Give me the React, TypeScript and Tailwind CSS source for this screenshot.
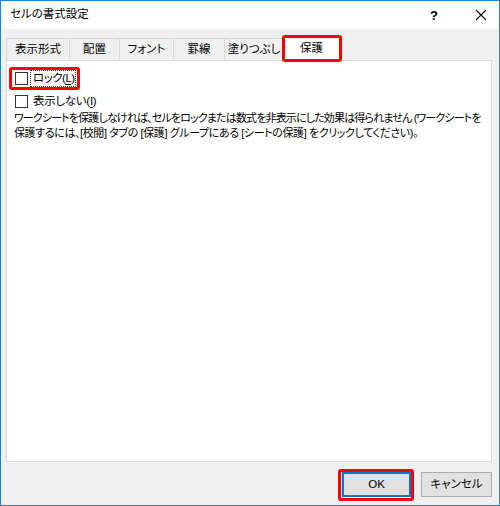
import React from "react";

const Tab = ({ label, w }: { label: string; w: string }) => (
  <div
    className={`${w} h-[22px] border-t border-l border-[#d9d9d9] flex items-center justify-center bg-[#f0f0f0] text-black`}
  >
    {label}
  </div>
);

export default function App() {
  return (
    <div className="w-[500px] h-[506px] border border-[#1883d7] flex flex-col bg-[#f0f0f0] text-[11.5px] leading-none text-black font-['Liberation_Sans','Noto_Sans_CJK_JP',sans-serif] [font-feature-settings:'palt'] overflow-hidden">
      {/* title bar */}
      <div className="h-[28px] bg-white flex items-center pl-[9px] shrink-0">
        <span className="flex-1">セルの書式設定</span>
        <span className="w-[20px] text-center mr-[31px] text-[13px] font-bold">?</span>
        <svg width="12" height="12" viewBox="0 0 12 12" className="mr-[12px]">
          <path d="M1 1 L11 11 M11 1 L1 11" stroke="#111" strokeWidth="1.1" />
        </svg>
      </div>

      {/* body */}
      <div className="flex-1 flex flex-col pl-[5px] pr-[7px]">
        {/* tabs */}
        <div className="mt-[7px] h-[24px] flex items-end relative z-10">
          <Tab label="表示形式" w="w-[63px]" />
          <Tab label="配置" w="w-[50px]" />
          <Tab label="フォント" w="w-[54px]" />
          <Tab label="罫線" w="w-[51px]" />
          <Tab label="塗りつぶし" w="w-[60px] border-r" />
          <div className="relative -ml-[2px] w-[59px] h-[25px] -mb-[1px] bg-white border-t border-l border-r border-[#d9d9d9] flex items-center justify-center">
            保護
            <div className="absolute -left-[1px] -right-[2px] -top-[2px] -bottom-[1px] border-[3px] border-[#ff0000] rounded-[3px]" />
          </div>
        </div>

        {/* panel */}
        <div className="h-[402px] w-[486px] border border-[#d9d9d9] bg-white pl-[7px] pt-[9px] flex flex-col shrink-0">
          <div className="relative h-[17px] flex items-center w-fit">
            <div className="w-[13px] h-[13px] border border-[#333] bg-white ml-[1px]" />
            <div className="ml-[2px] pl-[2px] pr-[0px] h-[17px] flex items-center border border-dotted border-[#333] tracking-[-0.5px]">
              ロック(<span className="underline underline-offset-2">L</span>)
            </div>
            <div className="absolute -left-[5px] -right-[4px] -top-[3px] -bottom-[3px] border-[3px] border-[#ff0000] rounded-[3px]" />
          </div>
          <div className="h-[17px] mt-[6px] flex items-center">
            <div className="w-[13px] h-[13px] border border-[#333] bg-white ml-[1px]" />
            <div className="ml-[5px] tracking-[-0.3px]">
              表示しない(<span className="underline underline-offset-2">I</span>)
            </div>
          </div>
          <div className="mt-[1px] text-[11px] leading-[15px] whitespace-nowrap">
            <div className="tracking-[-0.85px]">
              ワークシートを保護しなければ、セルをロックまたは数式を非表示にした効果は得られません (ワークシートを
            </div>
            <div className="tracking-[-0.4px]">
              保護するには、[校閲] タブの [保護] グループにある [シートの保護] をクリックしてください)。
            </div>
          </div>
        </div>

        {/* buttons */}
        <div className="mt-[10px] flex justify-end gap-[10px]">
          <div className="relative w-[69px] h-[25px] bg-[#e1e1e1] border border-[#0078d7] shadow-[inset_0_0_0_1px_#0078d7] flex items-center justify-center">
            OK
            <div className="absolute -left-[5px] -right-[4px] -top-[4px] -bottom-[5px] border-[3px] border-[#ff0000] rounded-[3px]" />
          </div>
          <div className="w-[71px] h-[25px] bg-[#e1e1e1] border border-[#adadad] flex items-center justify-center">
            キャンセル
          </div>
        </div>
      </div>
    </div>
  );
}
